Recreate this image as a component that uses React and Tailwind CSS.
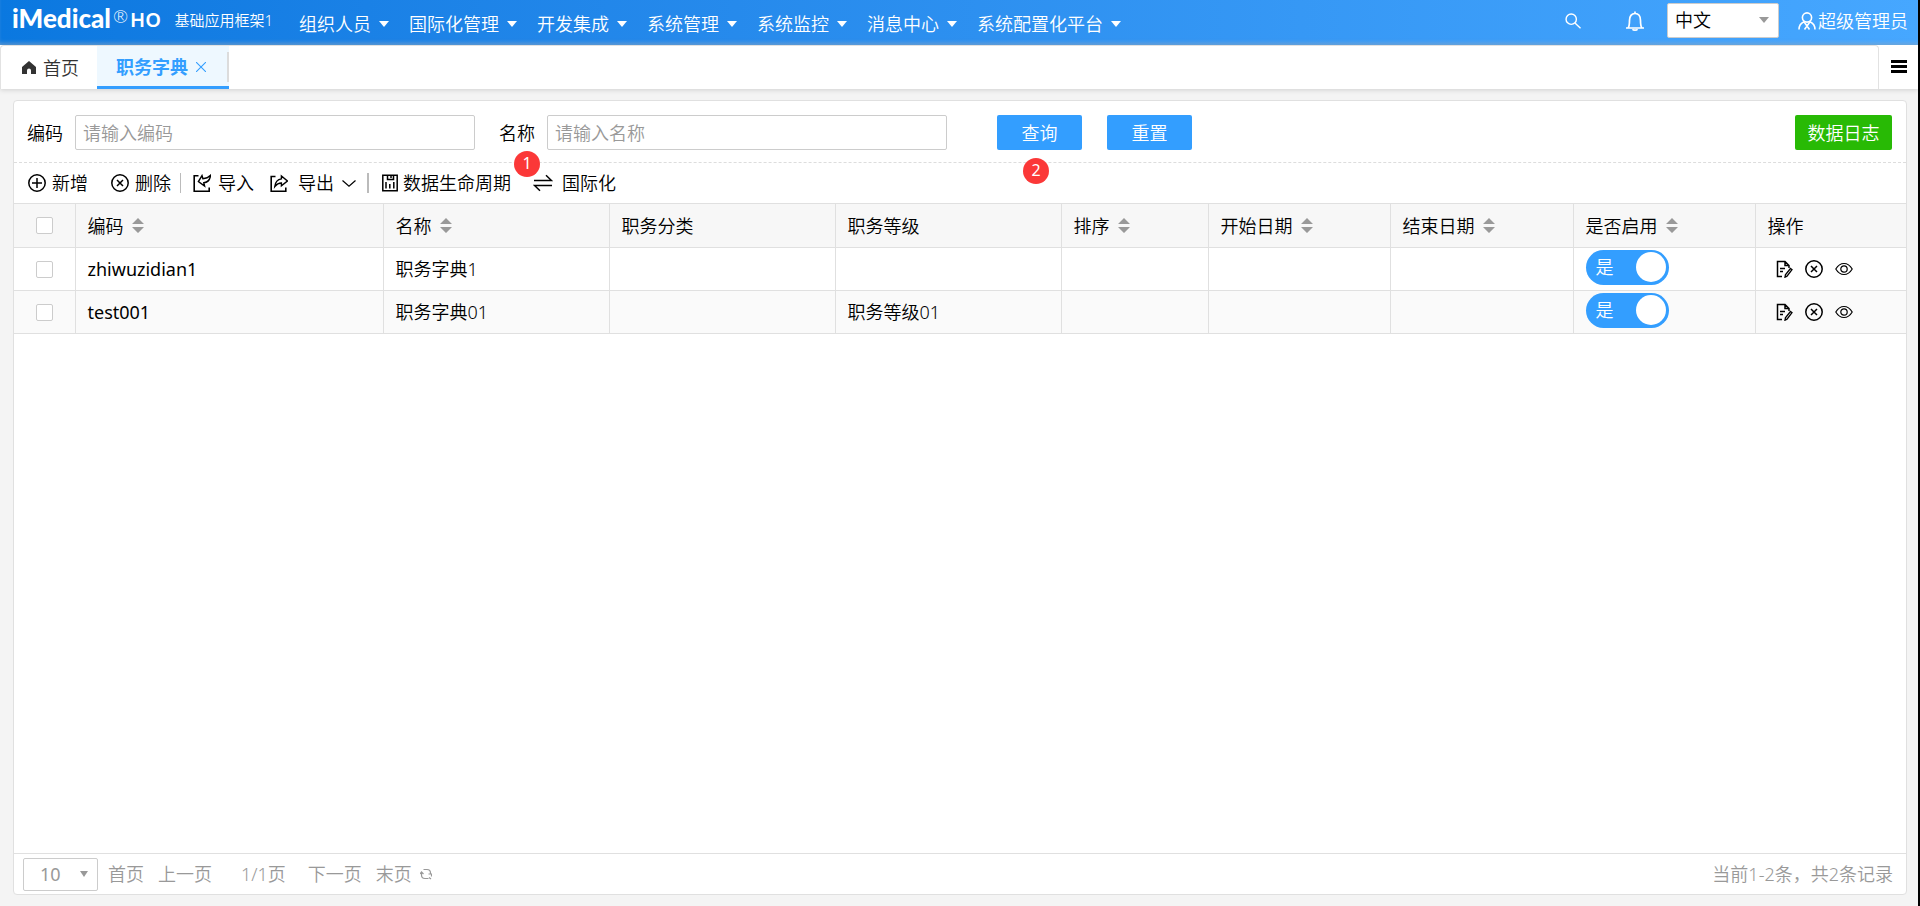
import React, { useState } from 'react';

const menus = ['组织人员', '国际化管理', '开发集成', '系统管理', '系统监控', '消息中心', '系统配置化平台'];

const columns = [
  { title: '编码', field: 'code', sortable: true, width: 'w-[308px]' },
  { title: '名称', field: 'name', sortable: true, width: 'w-[226px]' },
  { title: '职务分类', field: 'category', width: 'w-[226px]' },
  { title: '职务等级', field: 'level', width: 'w-[226px]' },
  { title: '排序', field: 'sort', sortable: true, width: 'w-[147px]' },
  { title: '开始日期', field: 'startDate', sortable: true, width: 'w-[182px]' },
  { title: '结束日期', field: 'endDate', sortable: true, width: 'w-[183px]' },
  { title: '是否启用', field: 'enabled', sortable: true, width: 'w-[182px]' },
];

const initialRows = [
  { id: 1, code: 'zhiwuzidian1', name: '职务字典1', enabled: true },
  { id: 2, code: 'test001', name: '职务字典01', level: '职务等级01', enabled: true },
];

/* ---------- icons ---------- */

const Icon = ({ className = 'size-[18px]', children, width = 1.5 }) => (
  <svg
    className={`shrink-0 ${className}`}
    viewBox="0 0 18 18"
    fill="none"
    stroke="currentColor"
    strokeWidth={width}
    aria-hidden="true"
  >
    {children}
  </svg>
);

const AddIcon = () => (
  <Icon>
    <circle cx="9" cy="9" r="8.2" />
    <path d="M9 4v10M4 9h10" />
  </Icon>
);

const RemoveIcon = () => (
  <Icon>
    <circle cx="9" cy="9" r="8.2" />
    <path d="M6 6l6 6M12 6l-6 6" />
  </Icon>
);

const ImportIcon = () => (
  <Icon width={1.6}>
    <path d="M5.500 1.800H1.200v15.400h15v-3.700" />
    <path d="M17.600 1.200c-.6 4.600-3 7.200-6.800 7.600l.8 3.200-6.200-4.400 3.600-6 .9 3.200c3.200-.2 5.600-1.400 7.700-3.600z" strokeWidth="1.400" />
  </Icon>
);

const ExportIcon = () => (
  <Icon width={1.6}>
    <path d="M5.500 2.500H1.200v14.700h14.600v-3.700" />
    <path d="M4.800 12.500c.6-4.800 3-7.200 6.600-7.600V2l6 5-6 4.800V9c-2.800 0-4.800 1.200-6.600 3.500z" strokeWidth="1.400" />
  </Icon>
);

const LifecycleIcon = () => (
  <Icon>
    <path d="M1.800 1.200h14.400v15.600H1.800z" />
    <path d="M5 8v6.500M8.800 10v4.500M12.800 8v6.500M6.500 1.500v4h6v-4M10 2v2" />
  </Icon>
);

const SwapIcon = () => (
  <Icon className="h-[18px] w-5">
    <path d="M0 6.500h17.500L12 1.200M18 11.500H.5L6 16.800" />
  </Icon>
);

const EditIcon = () => (
  <Icon>
    <path d="M7 16.500H2.500v-15H10l4 4v2.500M10 1.500v4h4M5 8.500h5M5 11.500h3" />
    <path d="M15.500 8.500l1.500 1.200-5 6.500-2 1 .4-2.300z" strokeWidth="1.300" />
  </Icon>
);

const EyeIcon = () => (
  <Icon width={1.2}>
    <path d="M.8 9C3 5.300 5.800 3.500 9 3.500S15 5.300 17.200 9C15 12.700 12.200 14.500 9 14.500S3 12.700.8 9z" />
    <circle cx="9" cy="9" r="3.200" />
  </Icon>
);

const Caret = ({ className }) => (
  <svg className={`shrink-0 ${className}`} viewBox="0 0 10 6" fill="currentColor" preserveAspectRatio="none" aria-hidden="true">
    <path d="M0 0h10L5 6z" />
  </svg>
);

const SortIcon = () => (
  <svg className="h-[15px] w-3 shrink-0 text-[#999]" viewBox="0 0 12 15" fill="currentColor" aria-hidden="true">
    <path d="M0 6h12L6 0zM0 9h12l-6 6z" />
  </svg>
);

/* ---------- sections ---------- */

const Header = () => (
  <header className="flex h-[45px] items-center bg-gradient-to-r from-[#0a78e0] to-[#46a7ff] text-white shadow-[inset_0_-4px_4px_-2px_rgba(150,180,210,0.6)]">
    <div className="flex w-[299px] items-start pb-1.5 pl-3">
      <span className="font-[Lato] text-[26px] leading-8 font-black">iMedical</span>
      <span className="px-0.5 font-[Lato] text-lg leading-7">®</span>
      <span className="font-['Noto_Sans'] text-xl leading-9 font-semibold">HO</span>
      <span className="ml-auto pr-[26px] text-[15px] leading-9 whitespace-nowrap">基础应用框架1</span>
    </div>
    <nav className="flex flex-1 gap-5 pt-0.5">
      {menus.map((menu) => (
        <button key={menu} type="button" className="flex items-center gap-2 whitespace-nowrap">
          {menu}
          <Caret className="h-1.5 w-2.5" />
        </button>
      ))}
    </nav>
    <div className="flex items-center pb-1">
      <button type="button" aria-label="搜索" className="mr-11">
        <Icon className="size-4" width={1.6}>
          <circle cx="7" cy="7" r="5.800" />
          <path d="M11.200 11.200L17.500 17.200" />
        </Icon>
      </button>
      <button type="button" aria-label="消息" className="mr-[22px]">
        <svg className="size-5" viewBox="0 0 20 20" fill="none" stroke="currentColor" strokeWidth="1.700" aria-hidden="true">
          <path d="M1 17h18M3 17c1.500-1.800 1.500-4 1.500-7.500C4.500 5.200 6.500 2.500 10 2.500s5.500 2.700 5.500 7c0 3.500 0 5.700 1.500 7.500M10 .5v2" />
          <path d="M7.500 18.200c.8 1.200 4.200 1.200 5 0" />
        </svg>
      </button>
      <div className="relative">
        <select aria-label="语言" className="h-[35px] w-28 appearance-none rounded-xs border border-[#ccc] bg-white pb-0.5 pl-[7px] text-black">
          <option>中文</option>
        </select>
        <Caret className="pointer-events-none absolute top-3.5 right-2.5 h-1.5 w-2.5 text-[#999]" />
      </div>
      <button type="button" className="ml-[19px] flex items-center gap-0.5 pr-2.5 whitespace-nowrap">
        <Icon width={1.6}>
          <circle cx="9" cy="5.500" r="4.600" />
          <path d="M1 17.500c0-4 2-6.500 5-7.800l3 4.300 3-4.300c3 1.300 5 3.800 5 7.800M9 14l-2.500 3.500M9 14l2.500 3.500" />
        </Icon>
        超级管理员
      </button>
    </div>
  </header>
);

const TabBar = () => (
  <div className="z-10 flex h-11 bg-white shadow-[0_1px_5px_rgba(0,0,0,0.15)]">
    <div className="flex flex-1 rounded-t border border-b-0 border-[#e2e2e2]">
      <button type="button" className="flex w-24 items-center gap-[7px] pl-[21px] text-[#333]">
        <svg className="h-[13px] w-3.5" viewBox="0 0 14 13" fill="currentColor" aria-hidden="true">
          <path d="M7 0L0 6v7h5V9.500a2 2 0 014 0V13h5V6z" />
        </svg>
        首页
      </button>
      <div className="flex w-[132px] items-center gap-2 border-b-[3px] border-[#339eff] bg-[#eef8ff] pt-0.5 pl-[19px] text-[#339eff]">
        <a href="#job" className="font-bold">职务字典</a>
        <button type="button" aria-label="关闭">
          <svg className="size-2.5" viewBox="0 0 10 10" stroke="currentColor" strokeWidth="1.100" aria-hidden="true">
            <path d="M0 0l10 10M10 0L0 10" />
          </svg>
        </button>
      </div>
      <span className="-ml-0.5 mt-1.5 h-[30px] w-0.5 bg-[#dcdcdc]" />
    </div>
    <button type="button" aria-label="菜单" className="flex w-[39px] items-center justify-center pb-0.5">
      <svg className="h-[13px] w-4" viewBox="0 0 16 13" fill="currentColor" aria-hidden="true">
        <path d="M0 0h16v3H0zM0 5h16v3H0zM0 10h16v3H0z" />
      </svg>
    </button>
  </div>
);

const Badge = ({ className, children }) => (
  <span className={`absolute flex size-[26px] justify-center rounded-full bg-[#fb3838] text-base leading-6 font-normal text-white ${className}`}>
    {children}
  </span>
);

const SearchForm = () => (
  <form className="flex h-[62px] items-center border-b border-dashed border-[#ddd] pt-[11px] pr-3.5 pb-[9px] pl-[13px]">
    <label htmlFor="code" className="mr-3">编码</label>
    <input id="code" placeholder="请输入编码" className="h-[35px] w-[400px] rounded-xs border border-[#ccc] px-[7px] placeholder:text-[#999]" />
    <div className="relative mr-3 ml-6">
      <label htmlFor="name">名称</label>
      <Badge className="top-[30px] left-[15px]">1</Badge>
    </div>
    <input id="name" placeholder="请输入名称" className="h-[35px] w-[400px] rounded-xs border border-[#ccc] px-[7px] placeholder:text-[#999]" />
    <div className="relative ml-[50px]">
      <button type="button" className="block h-[35px] w-[85px] rounded-xs bg-[#339eff] text-white">查询</button>
      <Badge className="top-[43px] left-[26px]">2</Badge>
    </div>
    <button type="reset" className="ml-[25px] h-[35px] w-[85px] rounded-xs bg-[#339eff] text-white">重置</button>
    <button type="button" className="ml-auto h-[35px] w-[97px] rounded-xs bg-[#28ba05] text-white">数据日志</button>
  </form>
);

const ToolButton = ({ icon, className = '', children }) => (
  <button type="button" className={`flex items-center whitespace-nowrap ${className}`}>
    {icon}
    {children}
  </button>
);

const Toolbar = () => (
  <div className="flex h-10 items-center pl-3.5">
    <ToolButton icon={<AddIcon />} className="gap-1.5">新增</ToolButton>
    <ToolButton icon={<RemoveIcon />} className="ml-[23px] gap-1.5">删除</ToolButton>
    <span className="ml-[9px] h-5 w-px bg-[#bbb]" />
    <ToolButton icon={<ImportIcon />} className="ml-3 gap-[7px]">导入</ToolButton>
    <ToolButton icon={<ExportIcon />} className="ml-4 gap-2">
      <span className="pl-0.5">导出</span>
      <svg className="h-[7px] w-3.5" viewBox="0 0 14 7" fill="none" stroke="currentColor" strokeWidth="1.200" aria-hidden="true">
        <path d="M.5.5L7 6.200 13.500.5" />
      </svg>
    </ToolButton>
    <span className="ml-[11px] h-5 w-0.5 bg-[#bbb]" />
    <ToolButton icon={<LifecycleIcon />} className="ml-3 gap-1">数据生命周期</ToolButton>
    <ToolButton icon={<SwapIcon />} className="ml-[22px] gap-[9px]">国际化</ToolButton>
  </div>
);

const CheckBox = ({ label }) => (
  <input
    type="checkbox"
    aria-label={label}
    className="block size-[17px] appearance-none rounded-xs border border-[#ccc] bg-white checked:bg-[#339eff]"
  />
);

const Switch = ({ checked, onChange }) => (
  <label className={`mb-1 flex h-[35px] w-[83px] items-center justify-between rounded-full pr-[3px] pl-2.5 text-white ${checked ? 'bg-[#339eff]' : 'bg-[#ccc]'}`}>
    <input type="checkbox" className="sr-only" checked={checked} onChange={onChange} />
    {checked ? '是' : '否'}
    <span className="size-[30px] rounded-full bg-white" />
  </label>
);

const DataTable = () => {
  const [rows, setRows] = useState(initialRows);

  const toggle = (id) => setRows(rows.map((r) => (r.id === id ? { ...r, enabled: !r.enabled } : r)));

  return (
    <table className="w-full table-fixed border-collapse text-left">
      <thead>
        <tr className="h-11 border-y border-[#e0e0e0] bg-[#f7f7f7]">
          <th className="w-[61px] border-r border-[#e0e0e0] pl-[22px]"><CheckBox label="全选" /></th>
          {columns.map((col) => (
            <th key={col.field} className={`${col.width} border-r border-[#e0e0e0] px-3 font-[350]`}>
              <div className="flex items-center gap-2">
                {col.title}
                {col.sortable && <SortIcon />}
              </div>
            </th>
          ))}
          <th className="px-3 font-[350]">操作</th>
        </tr>
      </thead>
      <tbody>
        {rows.map((row) => (
          <tr key={row.id} className="h-[43px] border-b border-[#e0e0e0] even:bg-[#fafafa]">
            <td className="border-r border-[#e0e0e0] pl-[22px]"><CheckBox label={row.code} /></td>
            {columns.map((col) => (
              <td key={col.field} className={`border-r border-[#e0e0e0] px-3 ${col.field === 'code' ? 'font-normal' : ''}`}>
                {col.field === 'enabled' ? (
                  <Switch checked={row.enabled} onChange={() => toggle(row.id)} />
                ) : (
                  row[col.field]
                )}
              </td>
            ))}
            <td className="px-[19px]">
              <div className="flex items-center gap-3">
                <button type="button" aria-label="编辑"><EditIcon /></button>
                <button type="button" aria-label="删除"><RemoveIcon /></button>
                <button type="button" aria-label="查看"><EyeIcon /></button>
              </div>
            </td>
          </tr>
        ))}
      </tbody>
    </table>
  );
};

const Pagination = () => (
  <footer className="mt-auto flex h-[41px] items-center border-t border-[#e0e0e0] px-[9px] text-[#999]">
    <div className="relative">
      <select aria-label="每页条数" className="block h-[33px] w-[75px] appearance-none rounded-xs border border-[#ccc] bg-white pl-4 font-normal">
        <option>10</option>
      </select>
      <Caret className="pointer-events-none absolute top-[13px] right-2.5 h-1.5 w-2" />
    </div>
    <button type="button" className="ml-2.5">首页</button>
    <button type="button" className="ml-3.5">上一页</button>
    <span className="ml-[29px]">1/1页</span>
    <button type="button" className="ml-[22px]">下一页</button>
    <button type="button" className="ml-3.5">末页</button>
    <button type="button" aria-label="刷新" className="ml-2">
      <svg className="size-3" viewBox="0 0 12 12" fill="none" stroke="currentColor" strokeWidth="1.200" aria-hidden="true">
        <path d="M3.500 1.500H7a3.500 3.500 0 013.500 3.500v1M8.500 10.500H5A3.500 3.500 0 011.500 7V4.500M0 6l1.500-2L3.500 6M8.500 6h3v2.500M9 9.500l2 1.500" />
      </svg>
    </button>
    <span className="ml-auto pr-1">当前1-2条，共2条记录</span>
  </footer>
);

const App = () => {
  return (
    <div className="flex min-h-screen flex-col border-r-2 border-black bg-[#f4f4f4] font-['Noto_Sans','Noto_Sans_CJK_SC',sans-serif] text-lg leading-6 font-[350] text-black">
      <Header />
      <TabBar />
      <main className="mt-[11px] mr-[11px] mb-[11px] ml-[13px] flex flex-1 flex-col rounded border border-[#e0e0e0] bg-white">
        <SearchForm />
        <Toolbar />
        <DataTable />
        <Pagination />
      </main>
    </div>
  );
};

export default App;
